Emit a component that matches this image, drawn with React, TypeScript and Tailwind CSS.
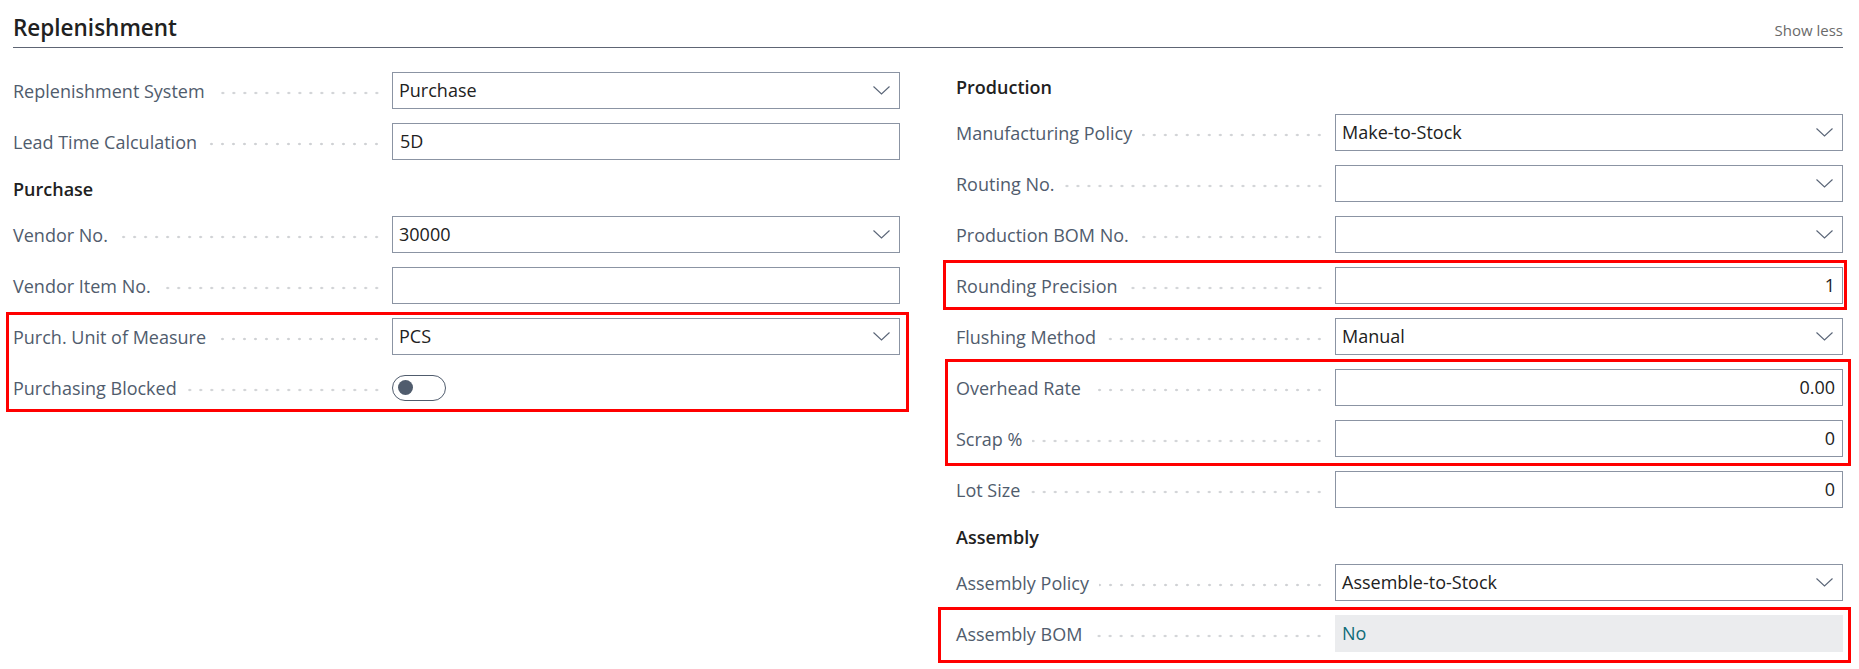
import type { ReactNode } from 'react';

type Field =
  | { kind: 'heading'; label: string }
  | { kind: 'select'; label: string; value: string }
  | { kind: 'text'; label: string; value: string; right?: boolean }
  | { kind: 'toggle'; label: string }
  | { kind: 'readonly'; label: string; value: string };

function Chevron() {
  return (
    <svg width="17" height="9" viewBox="0 0 17 9" fill="none" className="shrink-0">
      <polyline points="0.5,0.5 8.5,8 16.5,0.5" stroke="#5a6577" strokeWidth="1.1" />
    </svg>
  );
}

function Row({ label, children }: { label: string; children: ReactNode }) {
  return (
    <div className="flex h-[51px] items-center">
      <div className="flex w-[379px] shrink-0 items-center pr-[10px]">
        <span className="shrink-0 text-[18px] leading-none text-[#505c6d]">{label}</span>
        <span className="mt-[5px] ml-[10px] h-[4px] flex-1 bg-[image:radial-gradient(circle,#cfd1d4_1px,transparent_1.6px)] bg-size-[11px_4px] bg-right bg-repeat-x" />
      </div>
      <div className="min-w-0 flex-1">{children}</div>
    </div>
  );
}

function Control({ f }: { f: Field }) {
  if (f.kind === 'select') {
    return (
      <div className="flex h-[37px] items-center justify-between border border-[#8b94a3] pr-[9px] pl-[6px] text-[18px] text-[#212121]">
        <span>{f.value}</span>
        <Chevron />
      </div>
    );
  }
  if (f.kind === 'text') {
    return (
      <div
        className={`flex h-[37px] items-center border border-[#8b94a3] px-[7px] text-[18px] text-[#212121] ${
          f.right ? 'justify-end' : 'justify-start'
        }`}
      >
        {f.value}
      </div>
    );
  }
  if (f.kind === 'readonly') {
    return (
      <div className="flex h-[37px] items-center bg-[#ebecee] px-[7px] text-[18px] text-[#0e6b78]">{f.value}</div>
    );
  }
  if (f.kind === 'toggle') {
    return (
      <div className="flex h-[26px] w-[54px] items-center rounded-full border border-[#505c6d] pl-[5px]">
        <div className="h-[15px] w-[15px] rounded-full bg-[#505c6d]" />
      </div>
    );
  }
  return null;
}

function FieldRow({ f }: { f: Field }) {
  if (f.kind === 'heading') {
    return (
      <div className="flex h-[42px] items-center pt-[3px] text-[18px] font-semibold text-[#212121]">{f.label}</div>
    );
  }
  return (
    <Row label={f.label}>
      <Control f={f} />
    </Row>
  );
}

// red annotation frame drawn over a group of rows
function Marked({ children, frame }: { children: ReactNode; frame: string }) {
  return (
    <div className="relative">
      {children}
      <div className={`pointer-events-none absolute border-[3px] border-[#ff0000] ${frame}`} />
    </div>
  );
}

const left1: Field[] = [
  { kind: 'select', label: 'Replenishment System', value: 'Purchase' },
  { kind: 'text', label: 'Lead Time Calculation', value: '5D' },
  { kind: 'heading', label: 'Purchase' },
  { kind: 'select', label: 'Vendor No.', value: '30000' },
  { kind: 'text', label: 'Vendor Item No.', value: '' },
];

const left2: Field[] = [
  { kind: 'select', label: 'Purch. Unit of Measure', value: 'PCS' },
  { kind: 'toggle', label: 'Purchasing Blocked' },
];

export default function App() {
  return (
    <div className="h-[669px] w-[1859px] overflow-hidden bg-white font-['Open_Sans',sans-serif]">
      <div className="pr-[16px] pl-[13px]">
        <div className="flex items-baseline justify-between border-b border-[#5e6574] pt-[13px] pb-[5px]">
          <h2 className="text-[22.5px] leading-[29px] font-semibold text-[#212121]">Replenishment</h2>
          <span className="text-[15px] text-[#6a6a6a]">Show less</span>
        </div>

        <div className="grid grid-cols-2 gap-x-[56px] pt-[17px]">
          <div>
            {left1.map((f) => (
              <FieldRow key={f.label} f={f} />
            ))}
            <Marked frame="-left-[7px] -right-[9px] top-[1px] bottom-[1px]">
              {left2.map((f) => (
                <FieldRow key={f.label} f={f} />
              ))}
            </Marked>
          </div>

          <div>
            <FieldRow f={{ kind: 'heading', label: 'Production' }} />
            <FieldRow f={{ kind: 'select', label: 'Manufacturing Policy', value: 'Make-to-Stock' }} />
            <FieldRow f={{ kind: 'select', label: 'Routing No.', value: '' }} />
            <FieldRow f={{ kind: 'select', label: 'Production BOM No.', value: '' }} />
            <Marked frame="-left-[13px] -right-[4px] top-0 bottom-[1px]">
              <FieldRow f={{ kind: 'text', label: 'Rounding Precision', value: '1', right: true }} />
            </Marked>
            <FieldRow f={{ kind: 'select', label: 'Flushing Method', value: 'Manual' }} />
            <Marked frame="-left-[11px] -right-[8px] -top-[3px] -bottom-[2px]">
              <FieldRow f={{ kind: 'text', label: 'Overhead Rate', value: '0.00', right: true }} />
              <FieldRow f={{ kind: 'text', label: 'Scrap %', value: '0', right: true }} />
            </Marked>
            <FieldRow f={{ kind: 'text', label: 'Lot Size', value: '0', right: true }} />
            <FieldRow f={{ kind: 'heading', label: 'Assembly' }} />
            <FieldRow f={{ kind: 'select', label: 'Assembly Policy', value: 'Assemble-to-Stock' }} />
            <Marked frame="-left-[18px] -right-[8px] -top-[1px] -bottom-[4px]">
              <FieldRow f={{ kind: 'readonly', label: 'Assembly BOM', value: 'No' }} />
            </Marked>
          </div>
        </div>
      </div>
    </div>
  );
}
